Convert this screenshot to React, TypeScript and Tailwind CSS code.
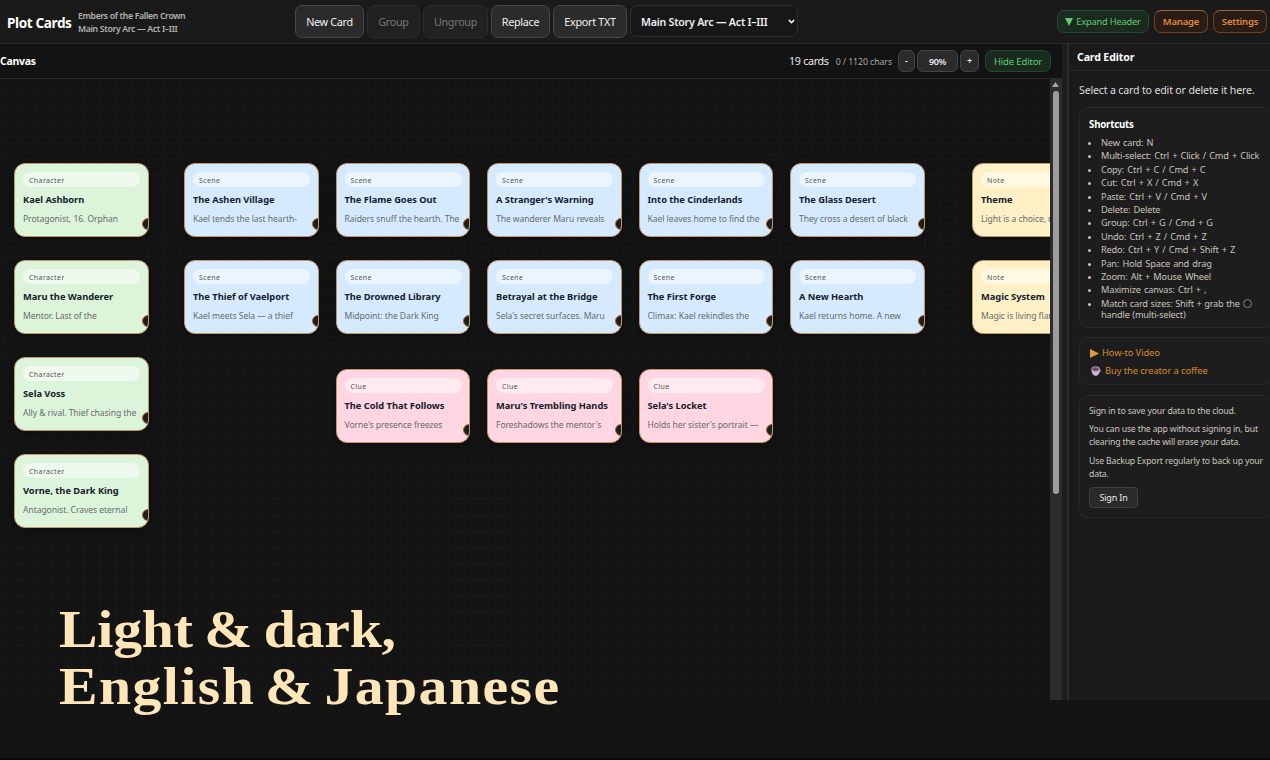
import React from "react";
import { ChevronDown } from "lucide-react";

type CardKind = "Character" | "Scene" | "Note" | "Clue";

interface PlotCard {
  kind: CardKind;
  title: string;
  body: string;
  x: number;
  y: number;
}

const cards: PlotCard[] = [
  { kind: "Character", title: "Kael Ashborn", body: "Protagonist, 16. Orphan", x: 14, y: 84 },
  { kind: "Character", title: "Maru the Wanderer", body: "Mentor. Last of the", x: 14, y: 181 },
  { kind: "Character", title: "Sela Voss", body: "Ally & rival. Thief chasing the", x: 14, y: 278 },
  { kind: "Character", title: "Vorne, the Dark King", body: "Antagonist. Craves eternal", x: 14, y: 375 },
  { kind: "Scene", title: "The Ashen Village", body: "Kael tends the last hearth-", x: 184, y: 84 },
  { kind: "Scene", title: "The Flame Goes Out", body: "Raiders snuff the hearth. The", x: 335.5, y: 84 },
  { kind: "Scene", title: "A Stranger's Warning", body: "The wanderer Maru reveals", x: 487, y: 84 },
  { kind: "Scene", title: "Into the Cinderlands", body: "Kael leaves home to find the", x: 638.5, y: 84 },
  { kind: "Scene", title: "The Glass Desert", body: "They cross a desert of black", x: 790, y: 84 },
  { kind: "Scene", title: "The Thief of Vaelport", body: "Kael meets Sela — a thief", x: 184, y: 181 },
  { kind: "Scene", title: "The Drowned Library", body: "Midpoint: the Dark King", x: 335.5, y: 181 },
  { kind: "Scene", title: "Betrayal at the Bridge", body: "Sela's secret surfaces. Maru", x: 487, y: 181 },
  { kind: "Scene", title: "The First Forge", body: "Climax: Kael rekindles the", x: 638.5, y: 181 },
  { kind: "Scene", title: "A New Hearth", body: "Kael returns home. A new", x: 790, y: 181 },
  { kind: "Clue", title: "The Cold That Follows", body: "Vorne's presence freezes", x: 335.5, y: 290 },
  { kind: "Clue", title: "Maru's Trembling Hands", body: "Foreshadows the mentor's", x: 487, y: 290 },
  { kind: "Clue", title: "Sela's Locket", body: "Holds her sister's portrait —", x: 638.5, y: 290 },
  { kind: "Note", title: "Theme", body: "Light is a choice, n", x: 972, y: 84 },
  { kind: "Note", title: "Magic System", body: "Magic is living flar", x: 972, y: 181 },
];

const kindColors: Record<CardKind, string> = {
  Character: "bg-[#dcf5da]",
  Scene: "bg-[#d6eaff]",
  Note: "bg-[#fff0c6]",
  Clue: "bg-[#ffd6e1]",
};

const shortcuts = [
  "New card: N",
  "Multi-select: Ctrl + Click / Cmd + Click",
  "Copy: Ctrl + C / Cmd + C",
  "Cut: Ctrl + X / Cmd + X",
  "Paste: Ctrl + V / Cmd + V",
  "Delete: Delete",
  "Group: Ctrl + G / Cmd + G",
  "Undo: Ctrl + Z / Cmd + Z",
  "Redo: Ctrl + Y / Cmd + Shift + Z",
  "Pan: Hold Space and drag",
  "Zoom: Alt + Mouse Wheel",
  "Maximize canvas: Ctrl + ,",
];

interface ToolButtonProps {
  label: string;
  width: string;
  disabled?: boolean;
}

function ToolButton({ label, width, disabled = false }: ToolButtonProps) {
  return (
    <button
      disabled={disabled}
      className={`h-[33px] shrink-0 rounded-[7px] border pt-0.5 text-[10.8px] tracking-[-0.3px] whitespace-nowrap ${width} ${
        disabled
          ? "border-[#2c2c2c] bg-[#212121] text-[#777]"
          : "border-[#464646] bg-[#2b2b2b] text-[#f0f0f0]"
      }`}
    >
      {label}
    </button>
  );
}

function Header() {
  return (
    <header className="flex h-11 shrink-0 items-center border-b border-[#2d2d2d] bg-[#1a1a1a] pl-[7px]">
      <h1 className="w-[71px] pt-[3px] text-[13.6px] font-bold tracking-[-0.4px] whitespace-nowrap text-white">
        Plot Cards
      </h1>
      <div className="w-[217px] pt-0.5 text-[8.7px] leading-[13px] font-semibold tracking-[-0.33px] whitespace-nowrap text-[#b4b4b4]">
        <div>Embers of the Fallen Crown</div>
        <div>Main Story Arc — Act I–III</div>
      </div>
      <div className="flex gap-[3px]">
        <ToolButton label="New Card" width="w-[69px]" />
        <ToolButton label="Group" width="w-[53px]" disabled />
        <ToolButton label="Ungroup" width="w-[65px]" disabled />
        <ToolButton label="Replace" width="w-[59px]" />
        <ToolButton label="Export TXT" width="w-[74px]" />
        <button className="flex h-8 w-[168px] items-center justify-between rounded-[7px] border border-[#2d2d2d] bg-[#171717] pt-0.5 pr-px pl-[10px] text-[10.7px] font-semibold tracking-[-0.25px] whitespace-nowrap text-[#eee]">
          Main Story Arc — Act I–III
          <ChevronDown className="mb-0.5 h-[9px] w-[9px]" strokeWidth={4} />
        </button>
      </div>
      <div className="ml-auto flex gap-[5px] pr-[3px] text-[9.5px] tracking-[-0.2px] whitespace-nowrap">
        <button className="flex h-[23px] w-[92px] items-center justify-center gap-[3px] rounded-[7px] border border-[#1f4a30] bg-[#1b2a1f] text-[9.3px] text-[#5fc878]">
          <svg viewBox="0 0 8 8" className="h-2 w-2" fill="currentColor">
            <path d="M0 0h8L4 8z" />
          </svg>
          <span className="pt-px">Expand Header</span>
        </button>
        <button className="h-[23px] w-[54px] rounded-[7px] border border-[#6e431f] border-t-[#96643c] bg-[#281c14] pt-0.5 font-semibold text-[#e48a3c]">
          Manage
        </button>
        <button className="h-[23px] w-[54px] rounded-[7px] border border-[#6e431f] border-t-[#96643c] bg-[#281c14] pt-0.5 font-semibold text-[#e48a3c]">
          Settings
        </button>
      </div>
    </header>
  );
}

function CardView({ card }: { card: PlotCard }) {
  return (
    <article
      className={`absolute h-[74px] w-[134.5px] overflow-hidden rounded-[11px] border border-[#c19668] px-2 pt-2 shadow-[0_3px_12px_rgba(0,0,0,0.35)] ${kindColors[card.kind]}`}
      style={{ left: card.x, top: card.y }}
    >
      <div className="h-[15px] w-[117px] rounded-full bg-white/50 pl-[6px] text-[7px] leading-[17px] tracking-[0.4px] text-[#555]">
        {card.kind}
      </div>
      <h3 className="mt-[6px] text-[9.3px] leading-[14px] font-bold tracking-[-0.02px] whitespace-nowrap text-[#14202b]">
        {card.title}
      </h3>
      <p className="mt-[5px] text-[8.6px] leading-[14px] tracking-[-0.08px] whitespace-nowrap text-[#666c6c]">
        {card.body}
      </p>
      <span className="absolute -right-[6px] bottom-[6px] h-3 w-3 rounded-full border border-[#a5642f] bg-[#1e1e1e]" />
    </article>
  );
}

function CanvasPanel() {
  return (
    <main className="flex w-[1062px] shrink-0 flex-col">
      <div className="flex h-[35px] shrink-0 items-center border-b border-[#2b2b2b] bg-[#131313] pr-[11px] text-[#e8e8e8]">
        <h2 className="pt-0.5 text-[10.5px] font-bold tracking-[-0.3px] text-white">Canvas</h2>
        <span className="ml-auto pt-px text-[10.7px] tracking-[-0.3px]">19 cards</span>
        <span className="ml-[7px] pt-[3px] text-[8.8px] tracking-[-0.1px] text-[#a8a8a8]">0 / 1120 chars</span>
        <div className="ml-[6px] flex gap-[2px] text-[9px] font-semibold">
          <button className="h-[22px] w-[17px] rounded-[6px] border border-[#444] bg-[#2b2b2b]">-</button>
          <button className="h-[22px] w-[41px] rounded-[6px] border border-[#444] bg-[#2b2b2b] pt-px tracking-[-0.4px]">90%</button>
          <button className="h-[22px] w-[19px] rounded-[6px] border border-[#444] bg-[#2b2b2b]">+</button>
        </div>
        <button className="ml-[6px] h-[22px] w-[66px] rounded-[7px] border border-[#1f4a30] bg-[#1b2a1f] pt-0.5 text-[9.5px] tracking-[-0.15px] whitespace-nowrap text-[#5fc878]">
          Hide Editor
        </button>
      </div>
      <div className="flex min-h-0 flex-1">
        {/* Card canvas */}
        <div className="relative w-[1050px] overflow-hidden bg-[#141414] bg-[linear-gradient(to_right,#171717_1px,transparent_1px),linear-gradient(to_bottom,#171717_1px,transparent_1px)] bg-[size:16.2px_16.2px] bg-[position:2px_15px]">
          {cards.map((card) => (
            <CardView key={card.title} card={card} />
          ))}
        </div>
        {/* Scrollbar */}
        <div className="flex w-3 flex-col items-center bg-[#2c2c2c] pr-px">
          <svg viewBox="0 0 7 5" className="mt-[3px] h-[5px] w-[7px]" fill="#a3a3a3">
            <path d="M3.5 0 7 5H0z" />
          </svg>
          <div className="mt-1 h-[403px] w-[6px] rounded-full bg-[#9c9c9c]" />
        </div>
      </div>
    </main>
  );
}

function EditorPanel() {
  return (
    <aside className="flex min-w-0 flex-1 flex-col overflow-hidden bg-[#1b1b1b]">
      <h2 className="flex h-[27px] shrink-0 items-center border-b border-[#272727] pt-0.5 pl-2 text-[10.6px] font-bold tracking-[-0.15px] text-white">
        Card Editor
      </h2>
      <div className="flex w-[203px] flex-col pl-[10px]">
        <p className="mt-[11px] text-[10.6px] leading-4 tracking-[-0.17px] whitespace-nowrap text-[#dedede]">
          Select a card to edit or delete it here.
        </p>

        <section className="mt-[9px] h-[221px] rounded-lg border border-[#282828] bg-[#1d1d1d] pt-[9px] pl-[9px]">
          <h3 className="text-[9.7px] leading-[15px] font-bold tracking-[-0.2px] text-white">Shortcuts</h3>
          <ul className="mt-1 list-disc pl-3 text-[9.2px] leading-[13.4px] tracking-[-0.17px] whitespace-nowrap text-[#c9c3ba] [word-spacing:1px]">
            {shortcuts.map((item) => (
              <li key={item}>{item}</li>
            ))}
            <li className="pt-px leading-[11px] [word-spacing:0.4px]">
              Match card sizes: Shift + grab the{" "}
              <span className="inline-block h-[9px] w-[9px] rounded-full border border-[#89857f] align-[-1px]" />
              <br />
              handle (multi-select)
            </li>
          </ul>
        </section>

        <section className="mt-[9px] flex h-[48px] flex-col gap-[4px] rounded-lg border border-[#282828] bg-[#1d1d1d] pt-[8px] pl-[10px] text-[9.4px] leading-[14px] tracking-[-0.1px] text-[#d48a2e]">
          <a className="flex items-center gap-[3px]">
            <svg viewBox="0 0 9 9" className="h-[9px] w-[9px]" fill="#e09a3e">
              <path d="M0 0 9 4.5 0 9z" />
            </svg>
            How-to Video
          </a>
          <a className="flex items-center gap-1">
            <svg viewBox="0 0 10 10" className="ml-px h-[10px] w-[10px]">
              <circle cx="8.1" cy="4.7" r="1.4" fill="none" stroke="#b9a7cf" strokeWidth=".8" />
              <path d="M.4 3.2C.4 7 2 9.8 4.7 9.8S8.8 7 8.8 3.2z" fill="#c5b5da" />
              <ellipse cx="4.6" cy="3" rx="4.2" ry="2.7" fill="#a893bb" />
              <ellipse cx="4.6" cy="3.1" rx="3.1" ry="1.9" fill="#734b52" />
            </svg>
            Buy the creator a coffee
          </a>
        </section>

        <section className="mt-[10px] h-[123px] rounded-lg border border-[#282828] bg-[#1d1d1d] pt-[9px] pl-[9px] text-[8.7px] leading-[13px] tracking-[-0.17px] whitespace-nowrap text-[#cbc5bb]">
          <p>Sign in to save your data to the cloud.</p>
          <p className="mt-[5px]">
            You can use the app without signing in, but
            <br />
            clearing the cache will erase your data.
          </p>
          <p className="mt-[6px]">
            Use Backup Export regularly to back up your
            <br />
            data.
          </p>
          <button className="mt-[6px] h-[21px] w-[49px] rounded-[4px] border border-[#414141] bg-[#2a2a2a] text-[9px] text-[#ececec]">
            Sign In
          </button>
        </section>
      </div>
    </aside>
  );
}

export default function App() {
  return (
    <div className="relative h-[760px] w-[1270px] overflow-hidden border-b-2 border-[#0a0808] bg-[#141414] font-['Noto_Sans','Open_Sans',sans-serif]">
      <div className="flex h-[700px] flex-col">
        <Header />
        <div className="flex min-h-0 flex-1">
          <CanvasPanel />
          {/* Resize handle */}
          <div className="w-[7px] shrink-0 border-r-2 border-[#2c2c2c] bg-[#1d1d1d]" />
          <EditorPanel />
        </div>
      </div>
      {/* Caption over the canvas */}
      <p className="absolute top-[601px] left-[59px] origin-left scale-x-109 font-['Liberation_Serif',serif] text-[53px] leading-[57px] font-bold whitespace-nowrap text-[#ffe6b8]">
        <span className="tracking-[-0.2px] [word-spacing:-2.5px]">Light & dark,</span>
        <br />
        <span className="tracking-[1.3px] [word-spacing:-5.5px]">English & Japanese</span>
      </p>
    </div>
  );
}
